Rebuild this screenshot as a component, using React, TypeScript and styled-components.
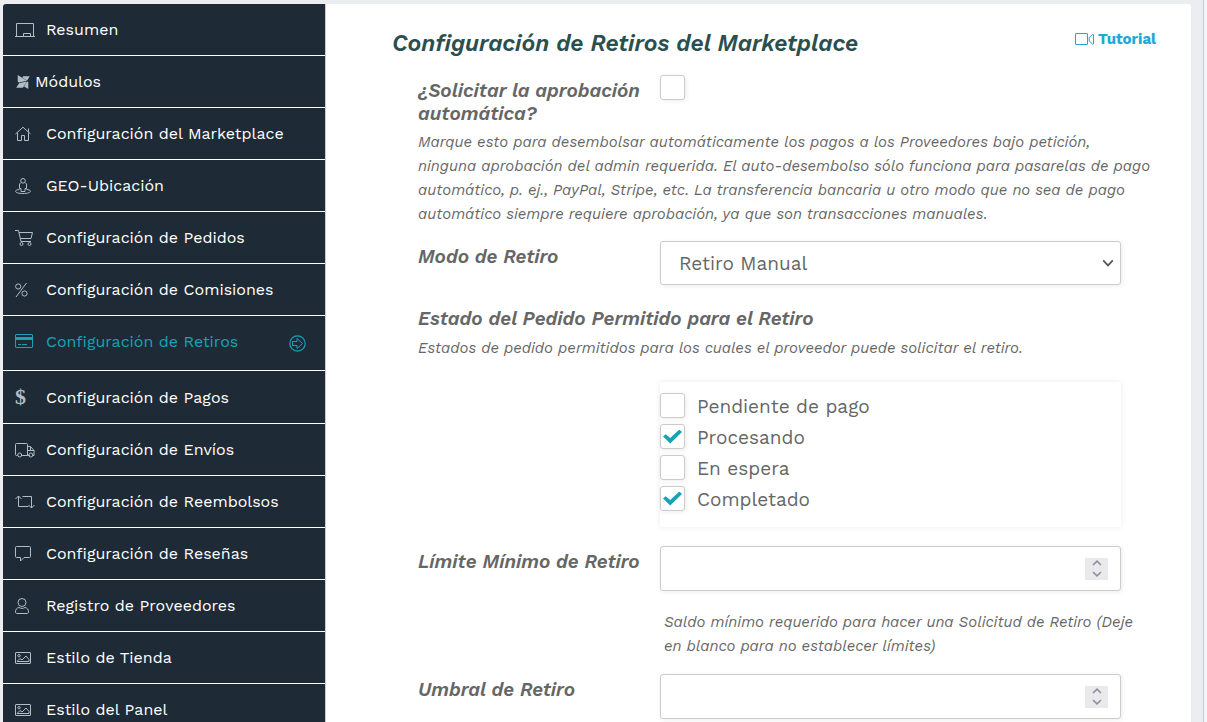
import React from "react";
import styled, { createGlobalStyle } from "styled-components";
import { FaModx } from "react-icons/fa";

const GlobalStyle = createGlobalStyle`
  *, *::before, *::after { box-sizing: border-box; }
  body {
    margin: 0;
    background: #ecedf1;
    color: #666;
    font-family: "Work Sans", Inter, "Liberation Sans", sans-serif;
  }
`;

const Shell = styled.div`
  display: flex;
  height: 100vh;
  overflow: hidden;
  padding: 4px 0 0 3px;
  margin-right: 3px;
  border-right: 1px solid #c9cacd;
  box-shadow: 3px 0 0 #f5f5f8;
`;

const Sidebar = styled.nav`
  flex: 0 0 323px;
  background: #1e2b36;
  border-right: 1px solid #ccc;
  border-top-left-radius: 3px;
`;

const Menu = styled.ul`
  list-style: none;
  margin: 0;
  padding: 0;
`;

const MenuLink = styled.a<{ $active?: boolean; $height?: number }>`
  display: flex;
  align-items: center;
  height: ${(p) => p.$height ?? 52}px;
  padding: 0 19px ${(p) => (p.$active ? 4 : 0)}px 12px;
  border-bottom: 1px solid #fff;
  color: ${(p) => (p.$active ? "#17a2b8" : "#fff")};
  font-size: 16px;
  font-weight: 400;
  text-decoration: none;
`;

const MenuIcon = styled.span<{ $active?: boolean; $tight?: boolean }>`
  display: flex;
  flex: none;
  width: ${(p) => (p.$tight ? 20 : 31)}px;
  color: ${(p) => (p.$active ? "#17a2b8" : "#b0bec5")};
`;

const MenuText = styled.span`
  flex: 1;
`;

const ActiveMark = styled.span`
  display: flex;
  padding-top: 4px;
`;

const Dollar = styled.span`
  font-family: "Liberation Serif", serif;
  font-weight: 700;
  font-size: 22px;
  line-height: 20px;
`;

const Card = styled.main`
  flex: 1;
  min-width: 0;
  margin-right: 12px;
  padding: 26px 35px 0 66px;
  background: #fff;
  border-top-right-radius: 3px;
`;

const Header = styled.header`
  display: flex;
  justify-content: space-between;
  align-items: flex-start;
  height: 45px;
`;

const Title = styled.h2`
  margin: 0;
  color: #2b4e4e;
  font-size: 23px;
  line-height: 28px;
  font-weight: 600;
  font-style: italic;
`;

const TutorialLink = styled.a`
  display: flex;
  align-items: center;
  gap: 4px;
  color: #20a8d8;
  font-size: 15px;
  line-height: 18px;
  font-weight: 700;
  text-decoration: none;
`;

const Form = styled.form`
  padding-left: 26px;
`;

const Field = styled.div`
  display: grid;
  grid-template-columns: 242px minmax(0, 1fr);
  padding-right: 35px;
`;

const Label = styled.label`
  padding-top: 4px;
  font-size: 19px;
  line-height: 23px;
  font-weight: 600;
  font-style: italic;
`;

const GroupTitle = styled.p`
  margin: 22px 0 0;
  font-size: 19px;
  line-height: 24px;
  font-weight: 600;
  font-style: italic;
`;

const Note = styled.p`
  margin: 5px 0 0;
  font-size: 15px;
  line-height: 24px;
  font-style: italic;
  white-space: nowrap;
`;

const Description = styled(Note)`
  margin-bottom: 15px;
`;

const Help = styled(Note)`
  margin: 19px 0 16px 246px;
`;

const Checkbox = styled.input`
  appearance: none;
  display: grid;
  place-items: center;
  flex: none;
  width: 25px;
  height: 25px;
  margin: 0;
  background: #fff;
  border: 1px solid #ccc;
  border-radius: 3px;
  box-shadow: 1px 1px 5px rgba(0, 0, 0, 0.08);
  &:checked::before {
    content: "";
    width: 19px;
    height: 14px;
    background: #17a2b8;
    clip-path: polygon(0 50%, 14% 34%, 38% 60%, 86% 0, 100% 18%, 38% 100%);
  }
`;

const control = `
  width: 100%;
  border: 1px solid #ccc;
  border-radius: 3px;
  background: #fff;
  box-shadow: 1px 1px 5px rgba(0, 0, 0, 0.08);
`;

const SelectBox = styled.div`
  ${control}
  display: grid;
  align-items: center;
  & > * { grid-area: 1 / 1; }
  & > svg { justify-self: end; margin-right: 6px; pointer-events: none; }
`;

const Select = styled.select`
  appearance: none;
  width: 100%;
  height: 42px;
  padding: 0 18px;
  border: 0;
  background: transparent;
  color: #666;
  font: inherit;
  font-size: 19px;
`;

const NumberBox = styled.div`
  ${control}
  display: flex;
  align-items: center;
  height: 45px;
  padding: 0 12px 0 18px;
`;

const NumberInput = styled.input`
  appearance: textfield;
  flex: 1;
  min-width: 0;
  border: 0;
  outline: 0;
  background: transparent;
  color: #666;
  font: inherit;
  font-size: 19px;
  &::-webkit-inner-spin-button { appearance: none; }
`;

const Spinner = styled.span`
  display: flex;
  flex-direction: column;
  width: 23px;
  height: 22px;
  background: #e9e9ec;
`;

const SpinButton = styled.button`
  display: flex;
  flex: 1;
  align-items: center;
  justify-content: center;
  padding: 0;
  border: 0;
  background: transparent;
  color: #8f8f9d;
`;

const StatusBox = styled.div`
  display: flex;
  flex-direction: column;
  gap: 6px;
  margin: 22px 35px 19px 242px;
  padding: 11px 0 16px;
  box-shadow: 0 0 6px rgba(0, 0, 0, 0.08);
`;

const StatusLabel = styled.label`
  display: flex;
  height: 25px;
  gap: 12px;
  font-size: 19px;
  line-height: 28px;
`;

const Line = ({ w = 20, h = 16, children }: { w?: number; h?: number; children: React.ReactNode }) => (
  <svg width={w} height={h} viewBox={`0 0 ${w} ${h}`} fill="none" stroke="currentColor" aria-hidden="true">
    {children}
  </svg>
);

const LaptopIcon = () => (
  <Line>
    <path d="M1.5 14.5V1.5h17v13M0 14.5h20M8.5 14v-2.5h7V14" />
  </Line>
);
const HomeIcon = () => (
  <Line w={16}>
    <path d="M.5 8 8 1.2 15.5 8M2.5 6.5v8h4v-5h3v5h4v-8M13.5 6V2.5" />
  </Line>
);
const GeoIcon = () => (
  <Line w={16}>
    <circle cx="8" cy="2.800" r="2.300" />
    <path d="M6 4.500 4.500 6v4.500h1.500v3h4v-3h1.500V6L10 4.500M4.500 11.500C2 11.700.6 12.300.6 13.300c0 1.300 3 2.200 7.400 2.200s7.400-.9 7.400-2.200c0-1-1.400-1.600-3.900-1.800" />
  </Line>
);
const CartIcon = () => (
  <Line w={18}>
    <path d="M0 .5h3.500l2.500 11h10M4 2.500h13.500l-1.500 6H5.500" />
    <circle cx="6.500" cy="14" r="1.500" />
    <circle cx="14.500" cy="14" r="1.500" />
  </Line>
);
const PercentIcon = () => (
  <Line w={13}>
    <path d="M11.500 1 1 15" />
    <circle cx="3.200" cy="4.500" r="2.600" />
    <circle cx="9.500" cy="11.500" r="2.600" />
  </Line>
);
const CreditIcon = () => (
  <Line w={18}>
    <rect x=".5" y="1.500" width="17" height="13" rx=".5" />
    <path d="M0 5.500h18" strokeWidth="3" />
    <path d="M3 11.500h3M7 11.500h5" />
  </Line>
);
const TruckIcon = () => (
  <Line>
    <path d="M2.500 13.500h-1a1 1 0 0 1-1-1v-10a1 1 0 0 1 1-1h10a1 1 0 0 1 1 1v11H7M12.500 4.500h3l3.500 4v5h-1M15 13.500h-2.500M13 8.500h6M15.500 5v3.500" />
    <circle cx="4.700" cy="13" r="2" />
    <circle cx="15.800" cy="13" r="2" />
  </Line>
);
const RetweetIcon = () => (
  <Line>
    <path d="M3.500 2v10.500h10M.5 5l3-3 3 3M7.500 2.500h9V14M13.500 11l3 3 3-3" />
  </Line>
);
const CommentIcon = () => (
  <Line w={16}>
    <path d="M1.500.5h13a1 1 0 0 1 1 1v9a1 1 0 0 1-1 1H9l-3.500 3.500v-3.500h-4a1 1 0 0 1-1-1v-9a1 1 0 0 1 1-1z" />
  </Line>
);
const UserIcon = () => (
  <Line w={15}>
    <circle cx="7" cy="4.500" r="4" />
    <path d="M4 9.500C1.500 10 .5 11.500.5 14c0 .8.500 1.500 1.300 1.500h10.400c.8 0 1.300-.7 1.300-1.500 0-2.500-1-4-3.500-4.500-2 1.200-4 1.200-6 0z" />
  </Line>
);
const ImageIcon = () => (
  <Line w={16} h={12}>
    <rect x=".5" y=".5" width="15" height="11" rx=".5" />
    <circle cx="4" cy="3.700" r="1.200" />
    <path d="M2 9.500h12V7.500l-3-3.500-4 4-2-1.500-3 3" />
  </Line>
);
const ArrowCircle = () => (
  <Line w={17} h={17}>
    <circle cx="8.500" cy="8.500" r="7.700" strokeWidth="1.200" />
    <path d="M3.500 6.500h4.500v-3l5.500 5-5.500 5v-3H3.500z" strokeLinejoin="round" />
  </Line>
);
const VideoIcon = () => (
  <Line w={19} h={13}>
    <rect x=".5" y=".5" width="12" height="11" rx=".5" />
    <path d="M14.200 4.500 17.500 1.500h1v9.500h-1l-3.300-3z" />
  </Line>
);

type Item = { text: string; icon: React.ReactNode; active?: boolean; tight?: boolean; height?: number };

const items: Item[] = [
  { text: "Resumen", icon: <LaptopIcon /> },
  { text: "Módulos", icon: <FaModx size={16} />, tight: true },
  { text: "Configuración del Marketplace", icon: <HomeIcon /> },
  { text: "GEO-Ubicación", icon: <GeoIcon /> },
  { text: "Configuración de Pedidos", icon: <CartIcon /> },
  { text: "Configuración de Comisiones", icon: <PercentIcon /> },
  { text: "Configuración de Retiros", icon: <CreditIcon />, active: true, height: 55 },
  { text: "Configuración de Pagos", icon: <Dollar>$</Dollar>, height: 53 },
  { text: "Configuración de Envíos", icon: <TruckIcon /> },
  { text: "Configuración de Reembolsos", icon: <RetweetIcon /> },
  { text: "Configuración de Reseñas", icon: <CommentIcon /> },
  { text: "Registro de Proveedores", icon: <UserIcon /> },
  { text: "Estilo de Tienda", icon: <ImageIcon /> },
  { text: "Estilo del Panel", icon: <ImageIcon /> },
];

const statuses = [
  { text: "Pendiente de pago", checked: false },
  { text: "Procesando", checked: true },
  { text: "En espera", checked: false },
  { text: "Completado", checked: true },
];

function NumberField({ id, label }: { id: string; label: string }) {
  const ref = React.useRef<HTMLInputElement>(null);
  return (
    <Field>
      <Label htmlFor={id}>{label}</Label>
      <NumberBox>
        <NumberInput id={id} type="number" ref={ref} />
        <Spinner>
          <SpinButton type="button" aria-label="Aumentar" onClick={() => ref.current?.stepUp()}>
            <svg width="10" height="6" viewBox="0 0 10 6" fill="none" stroke="currentColor" strokeWidth="1.600">
              <path d="M1 5 5 1.200 9 5" />
            </svg>
          </SpinButton>
          <SpinButton type="button" aria-label="Disminuir" onClick={() => ref.current?.stepDown()}>
            <svg width="10" height="6" viewBox="0 0 10 6" fill="none" stroke="currentColor" strokeWidth="1.600">
              <path d="M1 1 5 4.800 9 1" />
            </svg>
          </SpinButton>
        </Spinner>
      </NumberBox>
    </Field>
  );
}

export default function App() {
  return (
    <>
      <GlobalStyle />
      <Shell>
        <Sidebar>
          <Menu>
            {items.map((item) => (
              <li key={item.text}>
                <MenuLink
                  href="#"
                  $active={item.active}
                  $height={item.height}
                  aria-current={item.active ? "page" : undefined}
                >
                  <MenuIcon $active={item.active} $tight={item.tight}>
                    {item.icon}
                  </MenuIcon>
                  <MenuText>{item.text}</MenuText>
                  {item.active && (
                    <ActiveMark>
                      <ArrowCircle />
                    </ActiveMark>
                  )}
                </MenuLink>
              </li>
            ))}
          </Menu>
        </Sidebar>
        <Card>
          <Header>
            <Title>Configuración de Retiros del Marketplace</Title>
            <TutorialLink href="#">
              <VideoIcon />
              Tutorial
            </TutorialLink>
          </Header>
          <Form>
            <Field>
              <Label htmlFor="auto">¿Solicitar la aprobación automática?</Label>
              <Checkbox id="auto" type="checkbox" />
            </Field>
            <Description>
              Marque esto para desembolsar automáticamente los pagos a los Proveedores bajo petición,
              <br />
              ninguna aprobación del admin requerida. El auto-desembolso sólo funciona para pasarelas de pago
              <br />
              automático, p. ej., PayPal, Stripe, etc. La transferencia bancaria u otro modo que no sea de pago
              <br />
              automático siempre requiere aprobación, ya que son transacciones manuales.
            </Description>
            <Field>
              <Label htmlFor="mode">Modo de Retiro</Label>
              <SelectBox>
                <Select id="mode" defaultValue="manual">
                  <option value="manual">Retiro Manual</option>
                </Select>
                <svg width="12" height="8" viewBox="0 0 12 8" fill="none" stroke="#555" strokeWidth="1.700">
                  <path d="M1.200 1.400 6 6.400l4.800-5" />
                </svg>
              </SelectBox>
            </Field>
            <GroupTitle id="status-title">Estado del Pedido Permitido para el Retiro</GroupTitle>
            <Note>Estados de pedido permitidos para los cuales el proveedor puede solicitar el retiro.</Note>
            <StatusBox role="group" aria-labelledby="status-title">
              {statuses.map((s) => (
                <StatusLabel key={s.text}>
                  <Checkbox type="checkbox" defaultChecked={s.checked} />
                  <span>{s.text}</span>
                </StatusLabel>
              ))}
            </StatusBox>
            <NumberField id="limit" label="Límite Mínimo de Retiro" />
            <Help>
              Saldo mínimo requerido para hacer una Solicitud de Retiro (Deje
              <br />
              en blanco para no establecer límites)
            </Help>
            <NumberField id="threshold" label="Umbral de Retiro" />
          </Form>
        </Card>
      </Shell>
    </>
  );
}
